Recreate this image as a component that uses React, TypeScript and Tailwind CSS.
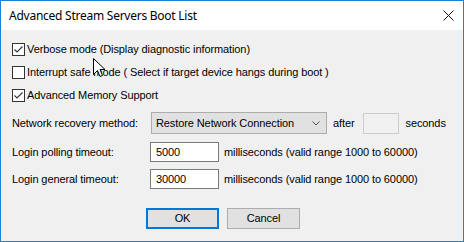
import React from "react";

const Check = ({ checked }: { checked: boolean }) => (
  <div className="w-[13px] h-[13px] border border-[#333333] bg-white flex items-center justify-center shrink-0">
    {checked && (
      <svg width="11" height="11" viewBox="0 0 11 11">
        <path d="M1.5 5.5 L4 8 L9.5 2.5" fill="none" stroke="#333333" strokeWidth="1.1" />
      </svg>
    )}
  </div>
);

export default function App() {
  const font = { fontFamily: '"Liberation Sans", Arial, sans-serif' };
  return (
    <div className="relative w-[464px] h-[242px] border border-[#1a82d8] flex flex-col bg-[#f0f0f0] text-[11px] tracking-[-0.1px] text-black" style={font}>
      <div className="h-[29px] bg-white flex items-center justify-between pl-[8px] pr-[9px] shrink-0">
        <span className="text-[12px] tracking-[-0.25px] text-black" style={{ fontFamily: '"Noto Sans", sans-serif' }}>
          Advanced Stream Servers Boot List
        </span>
        <svg width="11" height="11" viewBox="0 0 11 11">
          <path d="M0.5 0.5 L10.5 10.5 M10.5 0.5 L0.5 10.5" stroke="#111" strokeWidth="1" />
        </svg>
      </div>
      <div className="flex flex-col pl-[11px] pt-[8px]">
        <div className="h-[23px] flex items-center gap-[2px]">
          <Check checked />
          <span>Verbose mode (Display diagnostic information)</span>
        </div>
        <div className="h-[23px] flex items-center gap-[2px]">
          <Check checked={false} />
          <span>Interrupt safe mode ( Select if target device hangs during boot )</span>
        </div>
        <div className="h-[23px] flex items-center gap-[2px]">
          <Check checked />
          <span>Advanced Memory Support</span>
        </div>
        <div className="h-[22px] mt-[5px] flex items-center">
          <span className="w-[139px]">Network recovery method:</span>
          <div className="w-[176px] h-[22px] border border-[#adadad] bg-[#e1e1e1] flex items-center justify-between pl-[4px] pr-[6px]">
            <span>Restore Network Connection</span>
            <svg width="8" height="5" viewBox="0 0 8 5">
              <path d="M0.5 0.5 L4 4 L7.5 0.5" fill="none" stroke="#555" strokeWidth="1" />
            </svg>
          </div>
          <span className="ml-[6px]">after</span>
          <div className="ml-[8px] w-[36px] h-[21px] border border-[#cccccc] bg-[#f0f0f0]" />
          <span className="ml-[7px]">seconds</span>
        </div>
        <div className="h-[20px] mt-[8px] flex items-center">
          <span className="w-[138px]">Login polling timeout:</span>
          <div className="w-[69px] h-[20px] border border-[#7a7a7a] bg-white flex items-center pl-[5px]">5000</div>
          <span className="ml-[5px]">milliseconds (valid range 1000 to 60000)</span>
        </div>
        <div className="h-[20px] mt-[7px] flex items-center">
          <span className="w-[138px]">Login general timeout:</span>
          <div className="w-[69px] h-[20px] border border-[#7a7a7a] bg-white flex items-center pl-[5px]">30000</div>
          <span className="ml-[5px]">milliseconds (valid range 1000 to 60000)</span>
        </div>
        <div className="flex gap-[8px] mt-[19px] ml-[134px]">
          <div className="w-[73px] h-[21px] border-2 border-[#0078d7] bg-[#e1e1e1] flex items-center justify-center">OK</div>
          <div className="w-[73px] h-[21px] border border-[#adadad] bg-[#e1e1e1] flex items-center justify-center">Cancel</div>
        </div>
      </div>
      <svg className="absolute left-[92px] top-[57px]" width="13" height="20" viewBox="0 0 13 20">
        <path d="M0.5 0.5 L0.5 16.5 L4.5 12.5 L7 18.5 L9.5 17.5 L7 11.5 L12 11.5 Z" fill="white" stroke="black" strokeWidth="1" strokeLinejoin="miter" />
      </svg>
    </div>
  );
}
